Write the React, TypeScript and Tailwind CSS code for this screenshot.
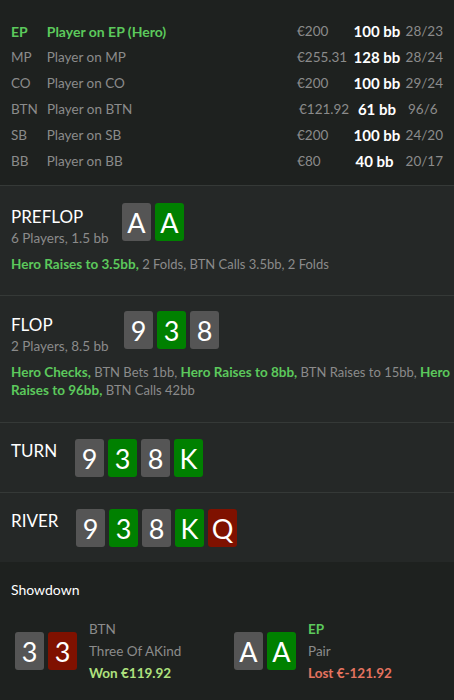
import React from "react";

type CardColor = "gray" | "green" | "red";
const cardBg: Record<CardColor, string> = {
  gray: "bg-[#555555]",
  green: "bg-[#008000]",
  red: "bg-[#7f1100]",
};

function Card({ r, c }: { r: string; c: CardColor }) {
  return (
    <div
      className={`w-[29px] h-[38px] rounded-[3px] ${cardBg[c]} flex items-center justify-center text-white text-[27px] leading-none`}
    >
      {r}
    </div>
  );
}

const players = [
  { pos: "EP", name: "Player on EP (Hero)", money: "€200", bb: "100 bb", st: "28/23", hero: true },
  { pos: "MP", name: "Player on MP", money: "€255.31", bb: "128 bb", st: "28/24" },
  { pos: "CO", name: "Player on CO", money: "€200", bb: "100 bb", st: "29/24" },
  { pos: "BTN", name: "Player on BTN", money: "€121.92", bb: "61 bb", st: "96/6" },
  { pos: "SB", name: "Player on SB", money: "€200", bb: "100 bb", st: "24/20" },
  { pos: "BB", name: "Player on BB", money: "€80", bb: "40 bb", st: "20/17" },
];

const G = "text-[#5cc95c] font-bold text-[14px]";
const GA = "text-[#5cc95c] font-bold";

export default function App() {
  return (
    <div
      className="w-[454px] min-h-[700px] bg-[#1e211f] text-[13px] text-[#8b8b8b]"
      style={{ fontFamily: 'Lato, "Open Sans", sans-serif' }}
    >
      {/* players */}
      <div className="pt-[18px] pb-[11px] px-[11px] border-b border-[#353937]">
        {players.map((p) => (
          <div key={p.pos} className="flex items-center h-[26px] text-[13.5px]">
            <div className={`w-[36px] ${p.hero ? G : ""}`}>{p.pos}</div>
            <div className={`w-[252px] ${p.hero ? G : ""}`}>{p.name}</div>
            <div className="w-[57px]">{p.money}</div>
            <div className="w-[40px] text-right text-white font-bold text-[15px] whitespace-nowrap">{p.bb}</div>
            <div className="pl-[12px]">{p.st}</div>
          </div>
        ))}
      </div>

      <div className="bg-[#252827]">
        {/* preflop */}
        <div className="pl-[11px] pr-0 pt-[17px] pb-[22px] border-b border-[#353937]">
          <div className="flex items-start">
            <div className="w-[111px]">
              <div className="text-white text-[17px] leading-[22px] mt-[3px]">PREFLOP</div>
              <div className="leading-[20px] text-[13.5px]">6 Players, 1.5 bb</div>
            </div>
            <div className="flex gap-[4px]">
              <Card r="A" c="gray" />
              <Card r="A" c="green" />
            </div>
          </div>
          <p className="mt-[7px] leading-[18px] text-[13.5px]">
            <span className={GA}>Hero Raises to 3.5bb,</span>
            <span className="text-[13px]"> 2 Folds, BTN Calls 3.5bb, 2 Folds</span>
          </p>
        </div>

        {/* flop */}
        <div className="pl-[11px] pr-0 pt-[15px] pb-[23px] border-b border-[#353937]">
          <div className="flex items-start">
            <div className="w-[113px]">
              <div className="text-white text-[17px] leading-[22px] mt-[3px]">FLOP</div>
              <div className="leading-[20px] text-[13.5px]">2 Players, 8.5 bb</div>
            </div>
            <div className="flex gap-[4px]">
              <Card r="9" c="gray" />
              <Card r="3" c="green" />
              <Card r="8" c="gray" />
            </div>
          </div>
          <p className="mt-[7px] leading-[18px] text-[13.5px]">
            <span className={GA}>Hero Checks,</span>
            <span className="text-[13px]"> BTN Bets 1bb, </span>
            <span className={GA}>Hero Raises to 8bb,</span>
            <span className="text-[13px]"> BTN Raises to 15bb, </span>
            <span className={GA}>Hero Raises to 96bb,</span>
            <span className="text-[13px]"> BTN Calls 42bb</span>
          </p>
        </div>

        {/* turn */}
        <div className="px-[11px] pt-[16px] pb-[15px] border-b border-[#353937] flex items-start">
          <div className="w-[64px] text-white text-[17px] leading-[22px] mt-[1px]">TURN</div>
          <div className="flex gap-[4px]">
            <Card r="9" c="gray" />
            <Card r="3" c="green" />
            <Card r="8" c="gray" />
            <Card r="K" c="green" />
          </div>
        </div>

        {/* river */}
        <div className="px-[11px] pt-[16px] pb-[15px] flex items-start">
          <div className="w-[65px] text-white text-[17px] leading-[22px] mt-[1px]">RIVER</div>
          <div className="flex gap-[4px]">
            <Card r="9" c="gray" />
            <Card r="3" c="green" />
            <Card r="8" c="gray" />
            <Card r="K" c="green" />
            <Card r="Q" c="red" />
          </div>
        </div>
      </div>

      {/* showdown */}
      <div className="px-[11px] pt-[19px]">
        <div className="text-white leading-[18px] text-[14px]">Showdown</div>
        <div className="flex mt-[19px]">
          <div className="flex items-center w-[223px] pl-[4px]">
            <div className="flex gap-[4px]">
              <Card r="3" c="gray" />
              <Card r="3" c="red" />
            </div>
            <div className="ml-[12px] leading-[22px] text-[13.5px]">
              <div>BTN</div>
              <div>Three Of AKind</div>
              <div className="text-[#aee27e] font-bold">Won €119.92</div>
            </div>
          </div>
          <div className="flex items-center">
            <div className="flex gap-[4px]">
              <Card r="A" c="gray" />
              <Card r="A" c="green" />
            </div>
            <div className="ml-[12px] leading-[22px] text-[13.5px]">
              <div className="text-[#5cc95c] font-bold">EP</div>
              <div>Pair</div>
              <div className="text-[#e5735f] font-bold">Lost €-121.92</div>
            </div>
          </div>
        </div>
      </div>
    </div>
  );
}
